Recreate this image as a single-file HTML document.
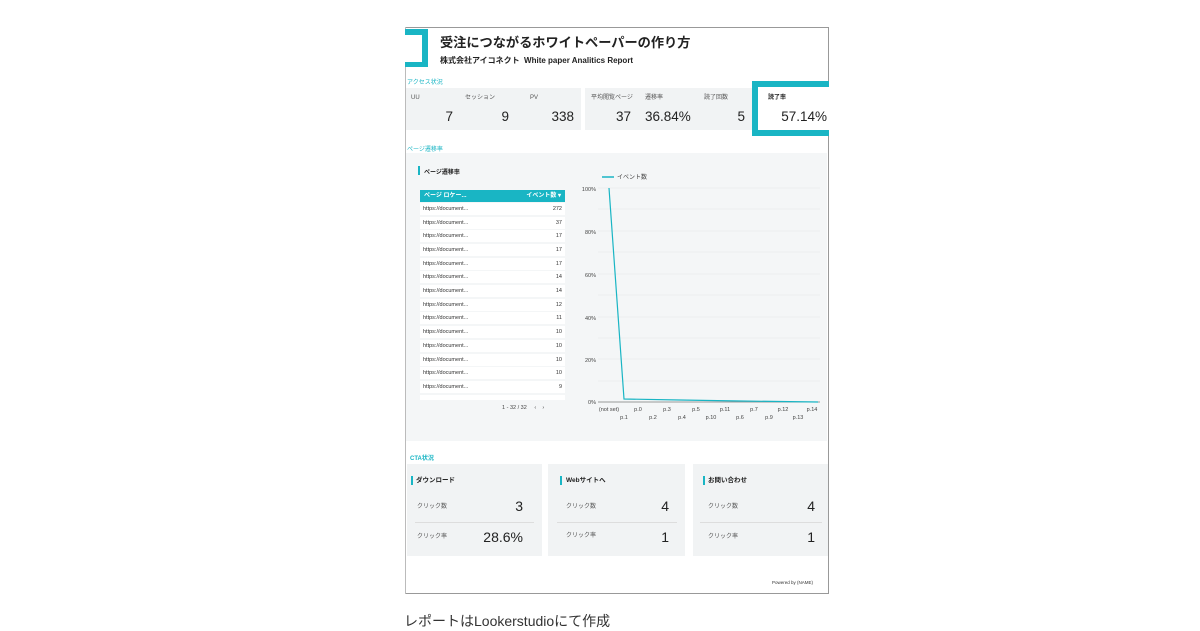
<!DOCTYPE html>
<html><head><meta charset="utf-8"><style>
*{margin:0;padding:0;box-sizing:border-box}
body{width:1200px;height:630px;background:#fff;position:relative;overflow:hidden;font-family:"Liberation Sans","Noto Sans CJK JP",sans-serif;color:#222}
.a{position:absolute}
.t{color:#19b5c4}
.g{background:#f1f3f4}
.lbl{font-size:6px;color:#555;line-height:8px}
.num{font-size:13.5px;color:#222;text-align:right}
.row{position:absolute;left:420px;width:145px;height:12px;background:#fff;font-size:5.5px;color:#333;line-height:12px;padding:0 3px}
.row span{float:right}
.ax{font-size:5.5px;color:#444}
</style></head><body>
<div class="a" style="left:405px;top:27px;width:424px;height:567px;border:1px solid #999;border-left:none"></div>
<div class="a" style="left:405px;top:27px;width:1px;height:567px;background:#bbb"></div>
<div class="a" style="left:405px;top:29px;width:23px;height:38px;background:#19b5c4"></div>
<div class="a" style="left:405px;top:35px;width:17px;height:27px;background:#fff"></div>
<div class="a" style="left:440px;top:35px;font-size:13.2px;font-weight:bold;color:#222;line-height:16px">受注につながるホワイトペーパーの作り方</div>
<div class="a" style="left:440px;top:55px;font-size:8px;font-weight:bold;color:#222">株式会社アイコネクト&nbsp; White paper Analitics Report</div>
<div class="a t" style="left:407px;top:77px;font-size:6px">アクセス状況</div>
<div class="a g" style="left:406px;top:88px;width:175px;height:42px"></div>
<div class="a g" style="left:585px;top:88px;width:167px;height:42px"></div>
<div class="a lbl" style="left:411px;top:94px">UU</div>
<div class="a lbl" style="left:465px;top:94px">セッション</div>
<div class="a lbl" style="left:530px;top:94px">PV</div>
<div class="a lbl" style="left:591px;top:94px">平均閲覧ページ</div>
<div class="a lbl" style="left:645px;top:94px">遷移率</div>
<div class="a lbl" style="left:704px;top:94px">読了回数</div>
<div class="a num" style="left:420px;top:109px;width:33px">7</div>
<div class="a num" style="left:475px;top:109px;width:34px">9</div>
<div class="a num" style="left:530px;top:109px;width:44px">338</div>
<div class="a num" style="left:600px;top:109px;width:31px">37</div>
<div class="a num" style="left:645px;top:109px;width:43px">36.84%</div>
<div class="a num" style="left:710px;top:109px;width:35px">5</div>
<div class="a" style="left:752px;top:81px;width:77px;height:55px;border:6px solid #19b5c4;border-right:none;background:#fff"></div>
<div class="a" style="left:768px;top:94px;font-size:6px;font-weight:bold;line-height:8px">読了率</div>
<div class="a num" style="left:775px;top:109px;width:52px">57.14%</div>
<div class="a t" style="left:407px;top:144px;font-size:6px">ページ遷移率</div>
<div class="a" style="left:406px;top:153px;width:421px;height:288px;background:#f4f6f7"></div>
<div class="a" style="left:418px;top:166px;width:2px;height:9px;background:#19b5c4"></div>
<div class="a" style="left:424px;top:167px;font-size:6px;font-weight:bold">ページ遷移率</div>
<div class="a" style="left:420px;top:190px;width:145px;height:12px;background:#19b5c4;color:#fff;font-size:6px;font-weight:bold;line-height:12px;padding:0 4px">ページ ロケー...<span style="float:right">イベント数 ▾</span></div>
<div class="row" style="top:203px">https://document...<span>272</span></div>
<div class="row" style="top:217px">https://document...<span>37</span></div>
<div class="row" style="top:230px">https://document...<span>17</span></div>
<div class="row" style="top:244px">https://document...<span>17</span></div>
<div class="row" style="top:258px">https://document...<span>17</span></div>
<div class="row" style="top:271px">https://document...<span>14</span></div>
<div class="row" style="top:285px">https://document...<span>14</span></div>
<div class="row" style="top:299px">https://document...<span>12</span></div>
<div class="row" style="top:312px">https://document...<span>11</span></div>
<div class="row" style="top:326px">https://document...<span>10</span></div>
<div class="row" style="top:340px">https://document...<span>10</span></div>
<div class="row" style="top:354px">https://document...<span>10</span></div>
<div class="row" style="top:367px">https://document...<span>10</span></div>
<div class="row" style="top:381px">https://document...<span>9</span></div>
<div class="row" style="top:395px;height:5px;overflow:hidden"></div>
<div class="a ax" style="left:502px;top:405px">1 - 32 / 32 &nbsp;&nbsp;&nbsp; ‹ &nbsp;&nbsp; ›</div>
<svg class="a" style="left:580px;top:170px" width="245" height="255">
<line x1="22" y1="7" x2="34" y2="7" stroke="#19b5c4" stroke-width="1.5"/>
<text x="37" y="9" font-size="6" fill="#444" font-family="Noto Sans CJK JP,sans-serif">イベント数</text>
<g stroke="#e2e5e7" stroke-width="0.6">
<line x1="18" y1="18" x2="240" y2="18"/><line x1="18" y1="39" x2="240" y2="39"/><line x1="18" y1="61" x2="240" y2="61"/><line x1="18" y1="82" x2="240" y2="82"/><line x1="18" y1="104" x2="240" y2="104"/><line x1="18" y1="125" x2="240" y2="125"/><line x1="18" y1="147" x2="240" y2="147"/><line x1="18" y1="168" x2="240" y2="168"/><line x1="18" y1="189" x2="240" y2="189"/><line x1="18" y1="211" x2="240" y2="211"/></g>
<line x1="18" y1="232" x2="240" y2="232" stroke="#999" stroke-width="1"/>
<polyline points="29,18 44,229 100,230 160,231 238,232" fill="none" stroke="#19b5c4" stroke-width="1.2"/>
<g font-size="5.5" fill="#444" font-family="Liberation Sans,sans-serif" text-anchor="end">
<text x="16" y="21">100%</text><text x="16" y="64">80%</text><text x="16" y="107">60%</text><text x="16" y="150">40%</text><text x="16" y="192">20%</text><text x="16" y="234">0%</text></g>
<g font-size="5.5" fill="#444" font-family="Liberation Sans,sans-serif" text-anchor="middle">
<text x="29" y="241">(not set)</text><text x="58" y="241">p.0</text><text x="87" y="241">p.3</text><text x="116" y="241">p.5</text><text x="145" y="241">p.11</text><text x="174" y="241">p.7</text><text x="203" y="241">p.12</text><text x="232" y="241">p.14</text>
<text x="44" y="249">p.1</text><text x="73" y="249">p.2</text><text x="102" y="249">p.4</text><text x="131" y="249">p.10</text><text x="160" y="249">p.6</text><text x="189" y="249">p.9</text><text x="218" y="249">p.13</text></g>
</svg>
<div class="a t" style="left:410px;top:453px;font-size:6px;font-weight:bold">CTA状況</div>
<div class="a g" style="left:407px;top:464px;width:135px;height:92px"></div>
<div class="a g" style="left:548px;top:464px;width:137px;height:92px"></div>
<div class="a g" style="left:693px;top:464px;width:135px;height:92px"></div>
<div class="a" style="left:411px;top:476px;width:2px;height:9px;background:#19b5c4"></div>
<div class="a" style="left:416px;top:476px;font-size:6.5px;font-weight:bold;line-height:9px">ダウンロード</div>
<div class="a" style="left:560px;top:476px;width:2px;height:9px;background:#19b5c4"></div>
<div class="a" style="left:566px;top:476px;font-size:6.5px;font-weight:bold;line-height:9px">Webサイトへ</div>
<div class="a" style="left:703px;top:476px;width:2px;height:9px;background:#19b5c4"></div>
<div class="a" style="left:708px;top:476px;font-size:6.5px;font-weight:bold;line-height:9px">お問い合わせ</div>
<div class="a" style="left:415px;top:522px;width:119px;height:1px;background:#ddd"></div>
<div class="a" style="left:557px;top:522px;width:120px;height:1px;background:#ddd"></div>
<div class="a" style="left:700px;top:522px;width:122px;height:1px;background:#ddd"></div>
<div class="a lbl" style="left:417px;top:503px">クリック数</div>
<div class="a lbl" style="left:417px;top:533px">クリック率</div>
<div class="a lbl" style="left:566px;top:503px">クリック数</div>
<div class="a lbl" style="left:566px;top:532px">クリック率</div>
<div class="a lbl" style="left:708px;top:503px">クリック数</div>
<div class="a lbl" style="left:708px;top:533px">クリック率</div>
<div class="a num" style="left:490px;top:498px;width:33px;font-size:14px">3</div>
<div class="a num" style="left:470px;top:529px;width:53px;font-size:14px">28.6%</div>
<div class="a num" style="left:640px;top:498px;width:29px;font-size:14px">4</div>
<div class="a num" style="left:640px;top:529px;width:29px;font-size:14px">1</div>
<div class="a num" style="left:785px;top:498px;width:30px;font-size:14px">4</div>
<div class="a num" style="left:785px;top:529px;width:30px;font-size:14px">1</div>
<div class="a" style="left:772px;top:580px;font-size:4.5px;color:#333">Powered by (NAME)</div>
<div class="a" style="left:404px;top:611px;font-size:14px;color:#333">レポートはLookerstudioにて作成</div>
</body></html>
